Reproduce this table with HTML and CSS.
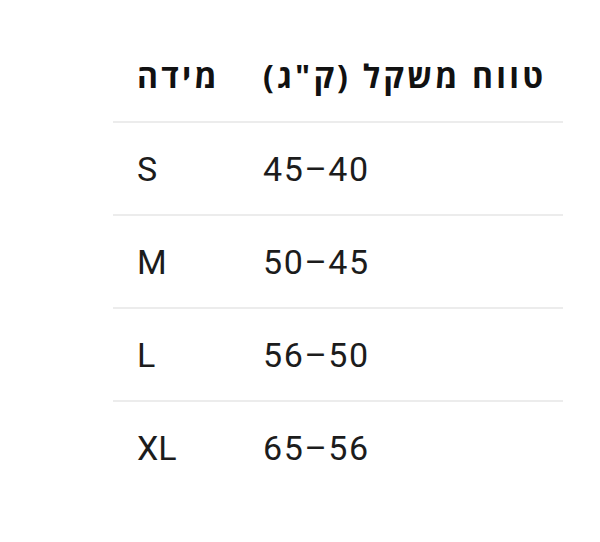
FILE: index.html
```html
<!DOCTYPE html>
<html lang="he">
<head>
<meta charset="utf-8">
<title>טבלת מידות</title>
<link rel="stylesheet" href="styles.css">
</head>
<body>
<div class="page">
  <table class="sizes">
    <thead>
      <tr>
        <th class="col-size" dir="rtl">מידה</th>
        <th class="col-weight" dir="rtl">טווח משקל (ק"ג)</th>
      </tr>
    </thead>
    <tbody>
      <tr><td class="col-size">S</td><td class="col-weight num" dir="rtl">40–45</td></tr>
      <tr><td class="col-size">M</td><td class="col-weight num" dir="rtl">45–50</td></tr>
      <tr><td class="col-size">L</td><td class="col-weight num" dir="rtl">50–56</td></tr>
      <tr class="last"><td class="col-size">XL</td><td class="col-weight num" dir="rtl">56–65</td></tr>
    </tbody>
  </table>
</div>
</body>
</html>
```
FILE: styles.css
```css
html, body {
  margin: 0;
  padding: 0;
  background: #ffffff;
}

.page {
  padding: 30px 37px 0 113px;
  font-family: Roboto, "Open Sans", "Noto Sans", sans-serif;
  color: #1c1c1c;
}

.sizes {
  width: 450px;
  border-collapse: collapse;
  table-layout: fixed;
}

.sizes th,
.sizes td {
  text-align: left;
  padding: 0 0 0 24px;
  height: 91px;
  border-bottom: 2px solid #ececec;
  vertical-align: middle;
}

.sizes .last td {
  border-bottom: none;
}

.col-size {
  width: 102px;
}

.sizes th {
  font-family: "Open Sans", "Liberation Sans", sans-serif;
  font-size: 32px;
  font-weight: 700;
  letter-spacing: 3.2px;
  color: #111111;
}

.sizes td {
  font-size: 34px;
  font-weight: 400;
}

.sizes td.num {
  letter-spacing: 1.6px;
}
```
